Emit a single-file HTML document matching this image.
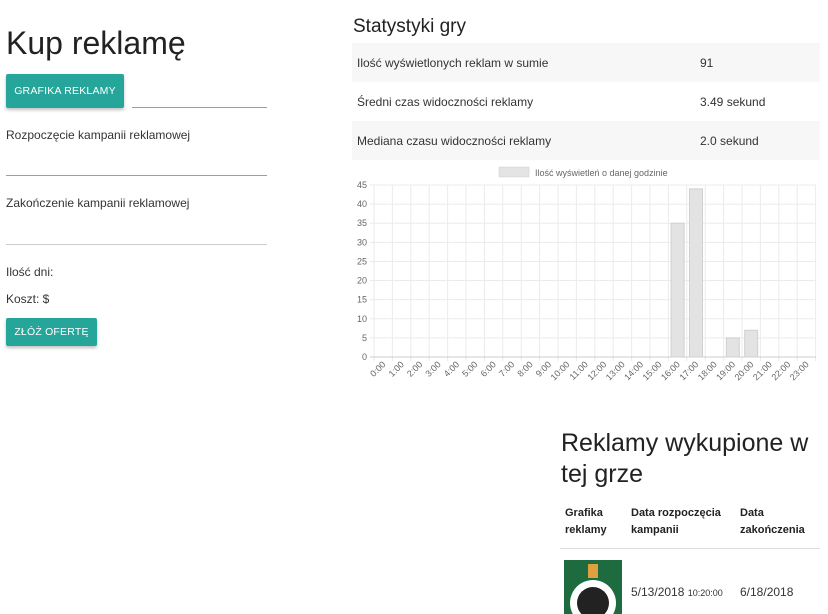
<!DOCTYPE html>
<html><head><meta charset="utf-8"><style>
*{box-sizing:border-box}
body{margin:0;width:828px;height:614px;overflow:hidden;background:#fff;font-family:"Liberation Sans",sans-serif;color:#222;position:relative}
.a{position:absolute;white-space:nowrap}
.btn{position:absolute;background:#26a69a;color:#fff;font-size:10.5px;letter-spacing:.2px;display:flex;align-items:center;justify-content:center;border-radius:2px;box-shadow:0 2px 3px rgba(0,0,0,.25)}
.line{position:absolute;height:1px;background:#9e9e9e}
.lbl{font-size:12px;color:#333}
.row{position:absolute;left:352px;width:468px;height:39px;font-size:12px;color:#333}
.row span{position:absolute;top:13px}
</style></head><body>
<div class="a" style="left:6px;top:25px;font-size:32px;color:#222">Kup reklamę</div>
<div class="btn" style="left:6px;top:74px;width:118px;height:34px">GRAFIKA REKLAMY</div>
<div class="line" style="left:132px;top:107px;width:135px"></div>
<div class="a lbl" style="left:6px;top:128px">Rozpoczęcie kampanii reklamowej</div>
<div class="line" style="left:6px;top:175px;width:261px"></div>
<div class="a lbl" style="left:6px;top:196px">Zakończenie kampanii reklamowej</div>
<div class="line" style="left:6px;top:244px;width:261px;background:#ccc"></div>
<div class="a lbl" style="left:6px;top:265px">Ilość dni:</div>
<div class="a lbl" style="left:6px;top:292px">Koszt: $</div>
<div class="btn" style="left:6px;top:318px;width:91px;height:28px">ZŁÓŻ OFERTĘ</div>

<div class="a" style="left:353px;top:16px;font-size:19px;color:#222">Statystyki gry</div>
<div class="row" style="top:43px;background:#f7f7f7"><span style="left:5px">Ilość wyświetlonych reklam w sumie</span><span style="left:348px">91</span></div>
<div class="row" style="top:82px"><span style="left:5px">Średni czas widoczności reklamy</span><span style="left:348px">3.49 sekund</span></div>
<div class="row" style="top:121px;background:#f7f7f7"><span style="left:5px">Mediana czasu widoczności reklamy</span><span style="left:348px">2.0 sekund</span></div>

<svg class="a" style="left:0;top:0" width="828" height="400" font-family="Liberation Sans,sans-serif">
<rect x="499" y="167" width="30" height="10" fill="#e4e4e4" stroke="#ccc" stroke-width=".5"/>
<text x="535" y="176" font-size="9" fill="#666">Ilość wyświetleń o danej godzinie</text>
<g stroke="#ebebeb" stroke-width="1" id="g"></g>
<g id="b" fill="#e3e3e3" stroke="#d0d0d0" stroke-width="1"></g>
<g id="t" font-size="9" fill="#666"></g>
</svg>
<script>
var g=document.getElementById('g'),b=document.getElementById('b'),t=document.getElementById('t'),s='',bs='',ts='';
for(var i=0;i<=24;i++){var x=374+i*18.4;s+='<line x1="'+x+'" y1="185" x2="'+x+'" y2="361"/>';}
for(var k=0;k<=9;k++){var y=357-k*19.11;s+='<line x1="370" y1="'+y+'" x2="816" y2="'+y+'"'+(k==0?' stroke="#ccc"':'')+'/>';ts+='<text x="367" y="'+(y+3)+'" text-anchor="end">'+(k*5)+'</text>';}
[[16,35],[17,44],[19,5],[20,7]].forEach(function(p){var c=374+18.4*(p[0]+.5),h=p[1]*3.822;bs+='<rect x="'+(c-6.5)+'" y="'+(357-h)+'" width="13" height="'+h+'"/>';});
for(var i=0;i<24;i++){var c=374+18.4*(i+.5)+3;ts+='<text x="'+c+'" y="365" text-anchor="end" transform="rotate(-45 '+c+' 365)">'+i+':00</text>';}
g.innerHTML=s;b.innerHTML=bs;t.innerHTML=ts;
</script>

<div class="a" style="left:561px;top:428px;font-size:25px;line-height:31px;color:#222;white-space:normal;width:260px">Reklamy wykupione w tej grze</div>
<div class="a" style="left:565px;top:505px;font-size:11px;font-weight:bold;line-height:17px">Grafika<br>reklamy</div>
<div class="a" style="left:631px;top:505px;font-size:11px;font-weight:bold;line-height:17px">Data rozpoczęcia<br>kampanii</div>
<div class="a" style="left:740px;top:505px;font-size:11px;font-weight:bold;line-height:17px">Data<br>zakończenia</div>
<div class="a" style="left:560px;top:548px;width:260px;height:1px;background:#ddd"></div>
<div class="a" style="left:564px;top:560px;width:58px;height:54px;background:#1d6b3e;overflow:hidden">
<div style="position:absolute;left:6px;top:20px;width:46px;height:46px;border-radius:50%;background:#fff"></div>
<div style="position:absolute;left:13px;top:27px;width:32px;height:32px;border-radius:50%;background:#222"></div>
<div style="position:absolute;left:24px;top:4px;width:10px;height:14px;background:#e0a040"></div>
</div>
<div class="a" style="left:631px;top:585px;font-size:12px;color:#333">5/13/2018 <span style="font-size:9px">10:20:00</span></div>
<div class="a" style="left:740px;top:585px;font-size:12px;color:#333">6/18/2018</div>
</body></html>
